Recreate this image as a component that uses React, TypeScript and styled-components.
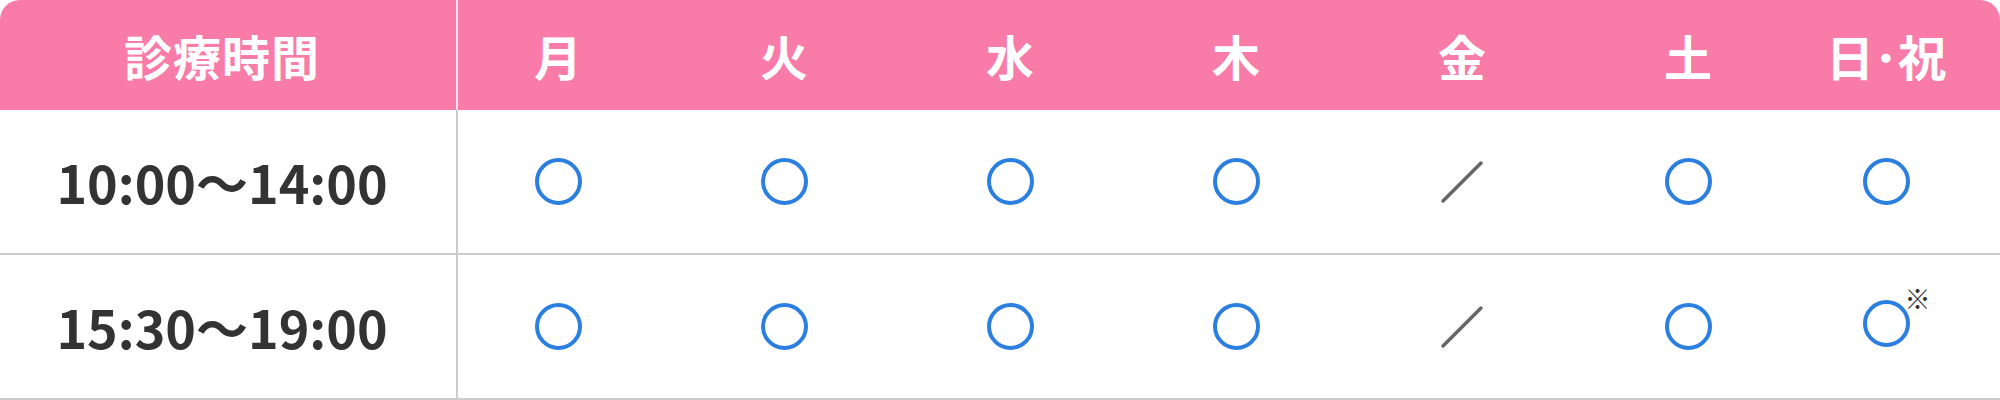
import React from 'react'
import styled, { createGlobalStyle } from 'styled-components'

const GlobalStyle = createGlobalStyle`
  html, body {
    margin: 0;
    padding: 0;
    background: #fff;
  }

  body {
    font-family: 'Noto Sans CJK JP', 'Noto Sans', sans-serif;
  }
`

const pink = '#f87ba8'
const blue = '#2b7fe0'
const line = '#cccccc'

const Table = styled.section`
  width: 2000px;
  display: flex;
  flex-direction: column;
`

const Row = styled.div<{ $head?: boolean }>`
  display: grid;
  grid-template-columns: 458px repeat(6, 226px) 1fr;
  height: ${(p) => (p.$head ? '110px' : '145px')};
  background: ${(p) => (p.$head ? pink : '#fff')};
  border-radius: ${(p) => (p.$head ? '20px 20px 0 0' : '0')};
  border-bottom: ${(p) => (p.$head ? 'none' : `2px solid ${line}`)};
  box-sizing: border-box;
`

const LabelCell = styled.div<{ $head?: boolean }>`
  display: flex;
  align-items: center;
  justify-content: center;
  padding-right: 12px;
  border-right: 2px solid ${(p) => (p.$head ? 'rgba(255, 255, 255, 0.8)' : line)};
  box-sizing: border-box;
  font-weight: 700;
  font-size: ${(p) => (p.$head ? '48px' : '52px')};
  color: ${(p) => (p.$head ? '#fff' : '#333')};
  letter-spacing: ${(p) => (p.$head ? '1px' : '0')};
`

const DayCell = styled.div`
  display: flex;
  align-items: center;
  justify-content: center;
  padding-right: 26px;
  box-sizing: border-box;
  color: #fff;
  font-size: 48px;
  font-weight: 700;

  &:last-child {
    padding-right: 42px;
  }
`

const Open = styled.span`
  position: relative;
  display: block;
  width: 47px;
  height: 47px;
  border: 4px solid ${blue};
  border-radius: 50%;
  box-sizing: border-box;
`

const NoteOpen = styled(Open)`
  margin-bottom: 6px;
`

const Note = styled.span`
  position: absolute;
  left: calc(100% - 1px);
  top: -19px;
  font-size: 26px;
  line-height: 1;
  font-weight: 400;
  color: #333;
`

const Slash = () => (
  <svg width="48" height="48" viewBox="0 0 48 48">
    <line x1="5" y1="43" x2="43" y2="5" stroke="#666" strokeWidth="3.5" strokeLinecap="round" />
  </svg>
)

const days = ['月', '火', '水', '木', '金', '土', '日･祝']

type Mark = 'open' | 'closed' | 'note'

const rows: { time: string; marks: Mark[] }[] = [
  { time: '10:00〜14:00', marks: ['open', 'open', 'open', 'open', 'closed', 'open', 'open'] },
  { time: '15:30〜19:00', marks: ['open', 'open', 'open', 'open', 'closed', 'open', 'note'] },
]

const renderMark = (mark: Mark) => {
  if (mark === 'closed') return <Slash />
  if (mark === 'note') {
    return (
      <NoteOpen>
        <Note>※</Note>
      </NoteOpen>
    )
  }
  return <Open />
}

export default function App() {
  return (
    <>
      <GlobalStyle />
      <Table>
        <Row $head>
          <LabelCell $head>診療時間</LabelCell>
          {days.map((d) => (
            <DayCell key={d}>{d}</DayCell>
          ))}
        </Row>
        {rows.map((r) => (
          <Row key={r.time}>
            <LabelCell>{r.time}</LabelCell>
            {r.marks.map((m, i) => (
              <DayCell key={i}>{renderMark(m)}</DayCell>
            ))}
          </Row>
        ))}
      </Table>
    </>
  )
}
